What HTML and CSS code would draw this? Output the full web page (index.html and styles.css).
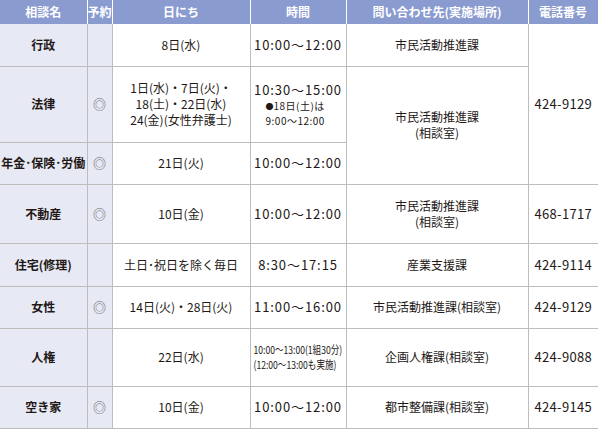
FILE: index.html
```html
<!DOCTYPE html>
<html lang="ja">
<head>
<meta charset="utf-8">
<title>相談日程</title>
<link rel="stylesheet" href="styles.css">
</head>
<body>
<table class="sched">
  <colgroup>
    <col class="c1"><col class="c2"><col class="c3"><col class="c4"><col class="c5"><col class="c6">
  </colgroup>
  <thead>
    <tr>
      <th>相談名</th><th>予約</th><th>日にち</th><th>時間</th><th>問い合わせ先(実施場所)</th><th>電話番号</th>
    </tr>
  </thead>
  <tbody>
    <tr class="h42">
      <th class="name">行政</th><td class="rsv"></td><td>8日(水)</td>
      <td class="time">10:00～12:00</td><td>市民活動推進課</td>
      <td class="tel" rowspan="3">424-9129</td>
    </tr>
    <tr class="h76">
      <th class="name">法律</th><td class="rsv">◎</td>
      <td>1日(水)・7日(火)・<br>18(土)・22日(水)<br>24(金)(女性弁護士)</td>
      <td class="time"><div class="main">10:30～15:00</div><div class="note"><span class="dot">●</span>18日(土)は<br>9:00～12:00</div></td>
      <td rowspan="2">市民活動推進課<br>(相談室)</td>
    </tr>
    <tr class="h42">
      <th class="name">年金･保険･労働</th><td class="rsv">◎</td><td>21日(火)</td>
      <td class="time">10:00～12:00</td>
    </tr>
    <tr class="h59">
      <th class="name">不動産</th><td class="rsv">◎</td><td>10日(金)</td>
      <td class="time">10:00～12:00</td><td>市民活動推進課<br>(相談室)</td>
      <td class="tel">468-1717</td>
    </tr>
    <tr class="h43">
      <th class="name">住宅(修理)</th><td class="rsv"></td><td>土日･祝日を除く毎日</td>
      <td class="time">8:30～17:15</td><td>産業支援課</td>
      <td class="tel">424-9114</td>
    </tr>
    <tr class="h42">
      <th class="name">女性</th><td class="rsv">◎</td><td>14日(火)・28日(火)</td>
      <td class="time">11:00～16:00</td><td>市民活動推進課(相談室)</td>
      <td class="tel">424-9129</td>
    </tr>
    <tr class="h58">
      <th class="name">人権</th><td class="rsv"></td><td>22日(水)</td>
      <td class="time"><div class="cond">10:00～13:00(1組30分)<br>(12:00～13:00も実施)</div></td>
      <td>企画人権課(相談室)</td>
      <td class="tel">424-9088</td>
    </tr>
    <tr class="h42">
      <th class="name">空き家</th><td class="rsv">◎</td><td>10日(金)</td>
      <td class="time">10:00～12:00</td><td>都市整備課(相談室)</td>
      <td class="tel">424-9145</td>
    </tr>
  </tbody>
</table>
</body>
</html>
```

FILE: styles.css
```css
body {
  margin: 0;
  background: #fff;
  font-family: "Noto Sans CJK JP", sans-serif;
  color: #231815;
}

.sched {
  border-collapse: collapse;
  table-layout: fixed;
  width: 598px;
  font-size: 12px;
}

.c1 { width: 87px; }
.c2 { width: 25px; }
.c3 { width: 138px; }
.c4 { width: 96px; }
.c5 { width: 182px; }
.c6 { width: 70px; }

.sched thead th {
  height: 24px;
  padding: 0;
  background: #8a9bd0;
  color: #fff;
  font-weight: bold;
  font-size: 12px;
  line-height: 16px;
  border-left: 1px solid #fff;
  border-right: 1px solid #fff;
}

.sched thead th:first-child { border-left: none; }

.sched tbody th,
.sched tbody td {
  padding: 0;
  text-align: center;
  vertical-align: middle;
  line-height: 16px;
  border-bottom: 1px solid #bdbdbd;
  border-right: 1px solid #bdbdbd;
}

.sched tbody th.name {
  background: #e7e9f5;
  font-weight: bold;
}

.sched tbody td.rsv {
  background: #e7e9f5;
  color: #666;
  font-size: 13px;
}

.sched tbody td.tel {
  border-right: none;
  font-size: 13px;
  letter-spacing: 0.3px;
}

.sched tbody td.time {
  font-size: 13px;
  letter-spacing: 0.9px;
  white-space: nowrap;
}

.main {
  line-height: 18px;
}

.note {
  text-align: left;
  padding-left: 15px;
  font-size: 10px;
  line-height: 14px;
  letter-spacing: 0.5px;
}

.dot {
  font-size: 8px;
  letter-spacing: 0;
}

.cond {
  display: inline-block;
  margin: 0 -20px;
  text-align: left;
  font-size: 11px;
  line-height: 15px;
  letter-spacing: 0;
  white-space: nowrap;
  transform: scaleX(0.78);
  transform-origin: center;
}

.h42 { height: 42px; }
.h43 { height: 43px; }
.h58 { height: 58px; }
.h59 { height: 59px; }
.h76 { height: 76px; }
```
